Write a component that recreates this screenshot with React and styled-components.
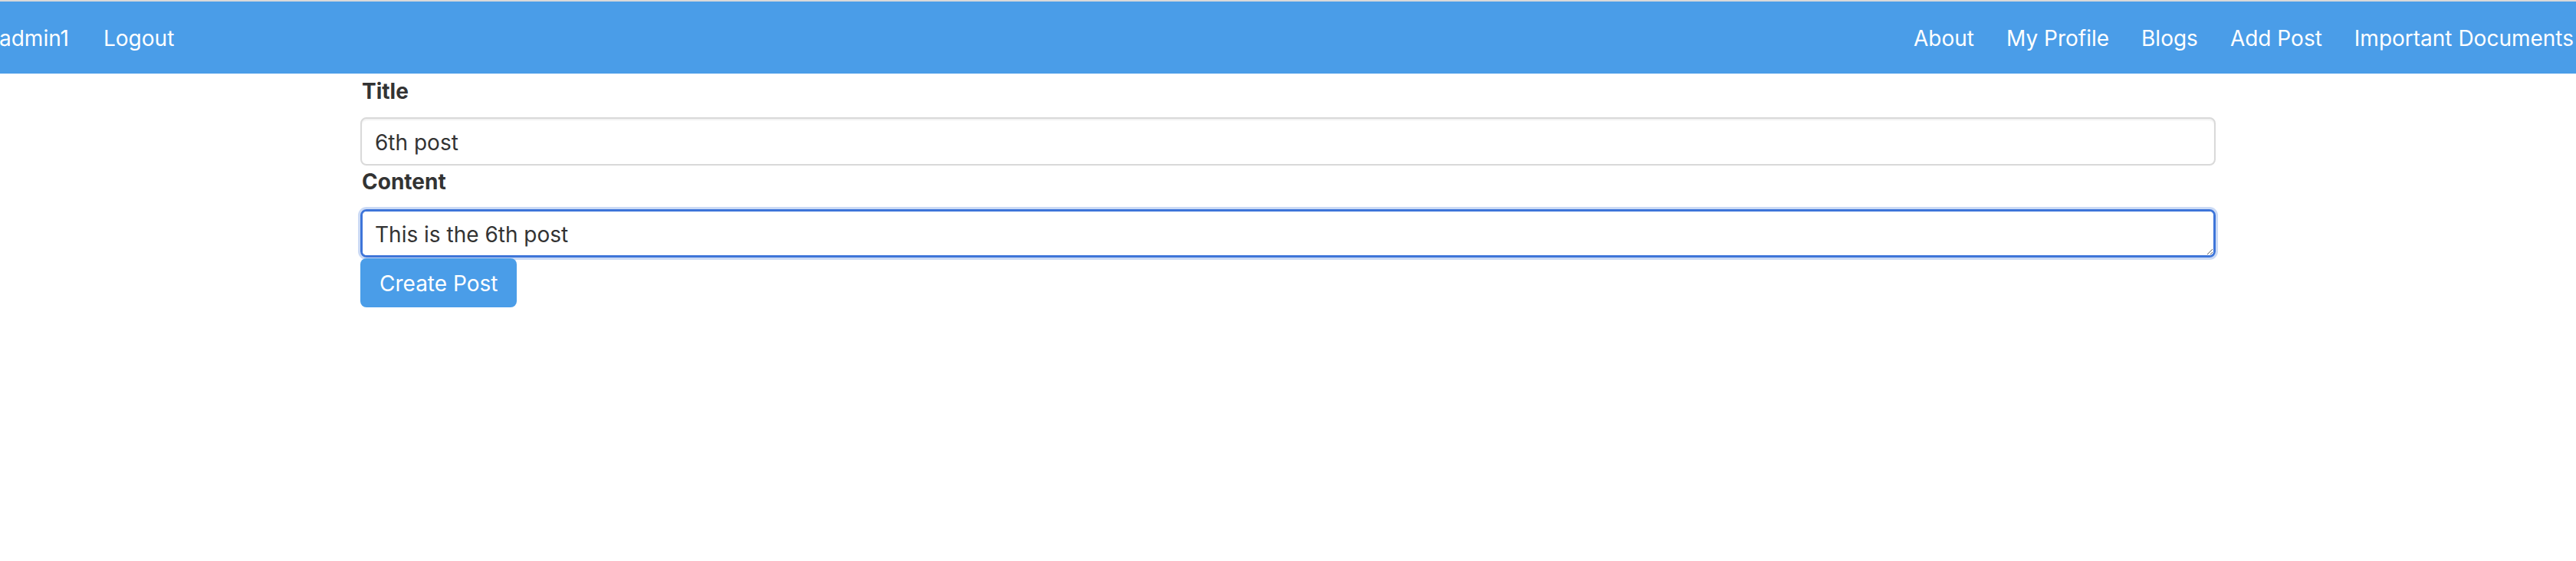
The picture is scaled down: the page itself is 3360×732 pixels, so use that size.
import React, { useEffect, useRef } from "react";
import styled, { createGlobalStyle } from "styled-components";

const GlobalStyle = createGlobalStyle`
  html, body {
    margin: 0;
    padding: 0;
    background: #ffffff;
  }
  body {
    font-family: Inter, "Noto Sans", "Liberation Sans", sans-serif;
    color: #333333;
  }
  * { box-sizing: border-box; }
`;

const TopBar = styled.header`
  display: flex;
  align-items: center;
  justify-content: space-between;
  height: 96px;
  border-top: 2px solid #d9d9d9;
  background: #4a9de8;
  padding: 0 3px 0 0;
  overflow: hidden;
`;

const NavGroup = styled.nav`
  display: flex;
  align-items: center;
  gap: ${(p) => p.$gap || 44}px;
  margin-left: ${(p) => p.$shift || 0}px;
`;

const NavLink = styled.a`
  color: #ffffff;
  font-size: 28px;
  line-height: 42px;
  padding-top: 2px;
  text-decoration: none;
  white-space: nowrap;
  cursor: pointer;
`;

const Page = styled.main`
  max-width: 2420px;
  margin: 0 auto;
  padding-top: 2px;
  display: flex;
  flex-direction: column;
`;

const Label = styled.label`
  display: block;
  font-size: 28px;
  font-weight: 700;
  line-height: 42px;
  color: #333333;
  padding-left: 2px;
  margin-bottom: 13px;
`;

const Field = styled.div`
  display: flex;
  flex-direction: column;
`;

const TextInput = styled.input`
  display: block;
  width: 100%;
  height: 63px;
  padding: 2px 17px 0;
  font-family: inherit;
  font-size: 28px;
  color: #333333;
  background: #ffffff;
  border: 2px solid #d9d9d9;
  border-radius: 8px;
  box-shadow: inset 0 2px 2px rgba(0, 0, 0, 0.06);
  outline: none;
`;

const TextArea = styled.textarea`
  display: block;
  width: 100%;
  height: 63px;
  margin-top: 2px;
  padding: 11px 16px 9px;
  font-family: inherit;
  font-size: 28px;
  line-height: 38px;
  color: #333333;
  background: #ffffff;
  border: 3px solid ${(p) => (p.$focused ? "#3e75d9" : "#d9d9d9")};
  border-radius: 8px;
  box-shadow: ${(p) => (p.$focused ? "0 0 0 3px #cbdaf5" : "none")};
  outline: none;
  resize: both;
  caret-color: #333333;
`;

const SubmitButton = styled.button`
  align-self: flex-start;
  margin-top: 1px;
  height: 64px;
  padding: 2px 25px 0;
  font-family: inherit;
  font-size: 28px;
  color: #ffffff;
  background: #4a9de8;
  border: none;
  border-radius: 8px;
  cursor: pointer;
`;

export default function App() {
  const areaRef = useRef(null);
  useEffect(() => {
    const el = areaRef.current;
    if (el) {
      el.focus();
      const len = el.value.length;
      el.setSelectionRange(len, len);
    }
  }, []);

  return (
    <>
      <GlobalStyle />
      <TopBar>
        <NavGroup $shift={-1} $gap={45}>
          <NavLink>admin1</NavLink>
          <NavLink>Logout</NavLink>
        </NavGroup>
        <NavGroup $gap={42}>
          <NavLink>About</NavLink>
          <NavLink>My Profile</NavLink>
          <NavLink>Blogs</NavLink>
          <NavLink>Add Post</NavLink>
          <NavLink>Important Documents</NavLink>
        </NavGroup>
      </TopBar>
      <Page>
        <Field>
          <Label htmlFor="title">Title</Label>
          <TextInput id="title" defaultValue="6th post" />
        </Field>
        <Field>
          <Label htmlFor="content">Content</Label>
          <TextArea
            id="content"
            ref={areaRef}
            $focused
            defaultValue="This is the 6th post"
          />
        </Field>
        <SubmitButton type="button">Create Post</SubmitButton>
      </Page>
    </>
  );
}
